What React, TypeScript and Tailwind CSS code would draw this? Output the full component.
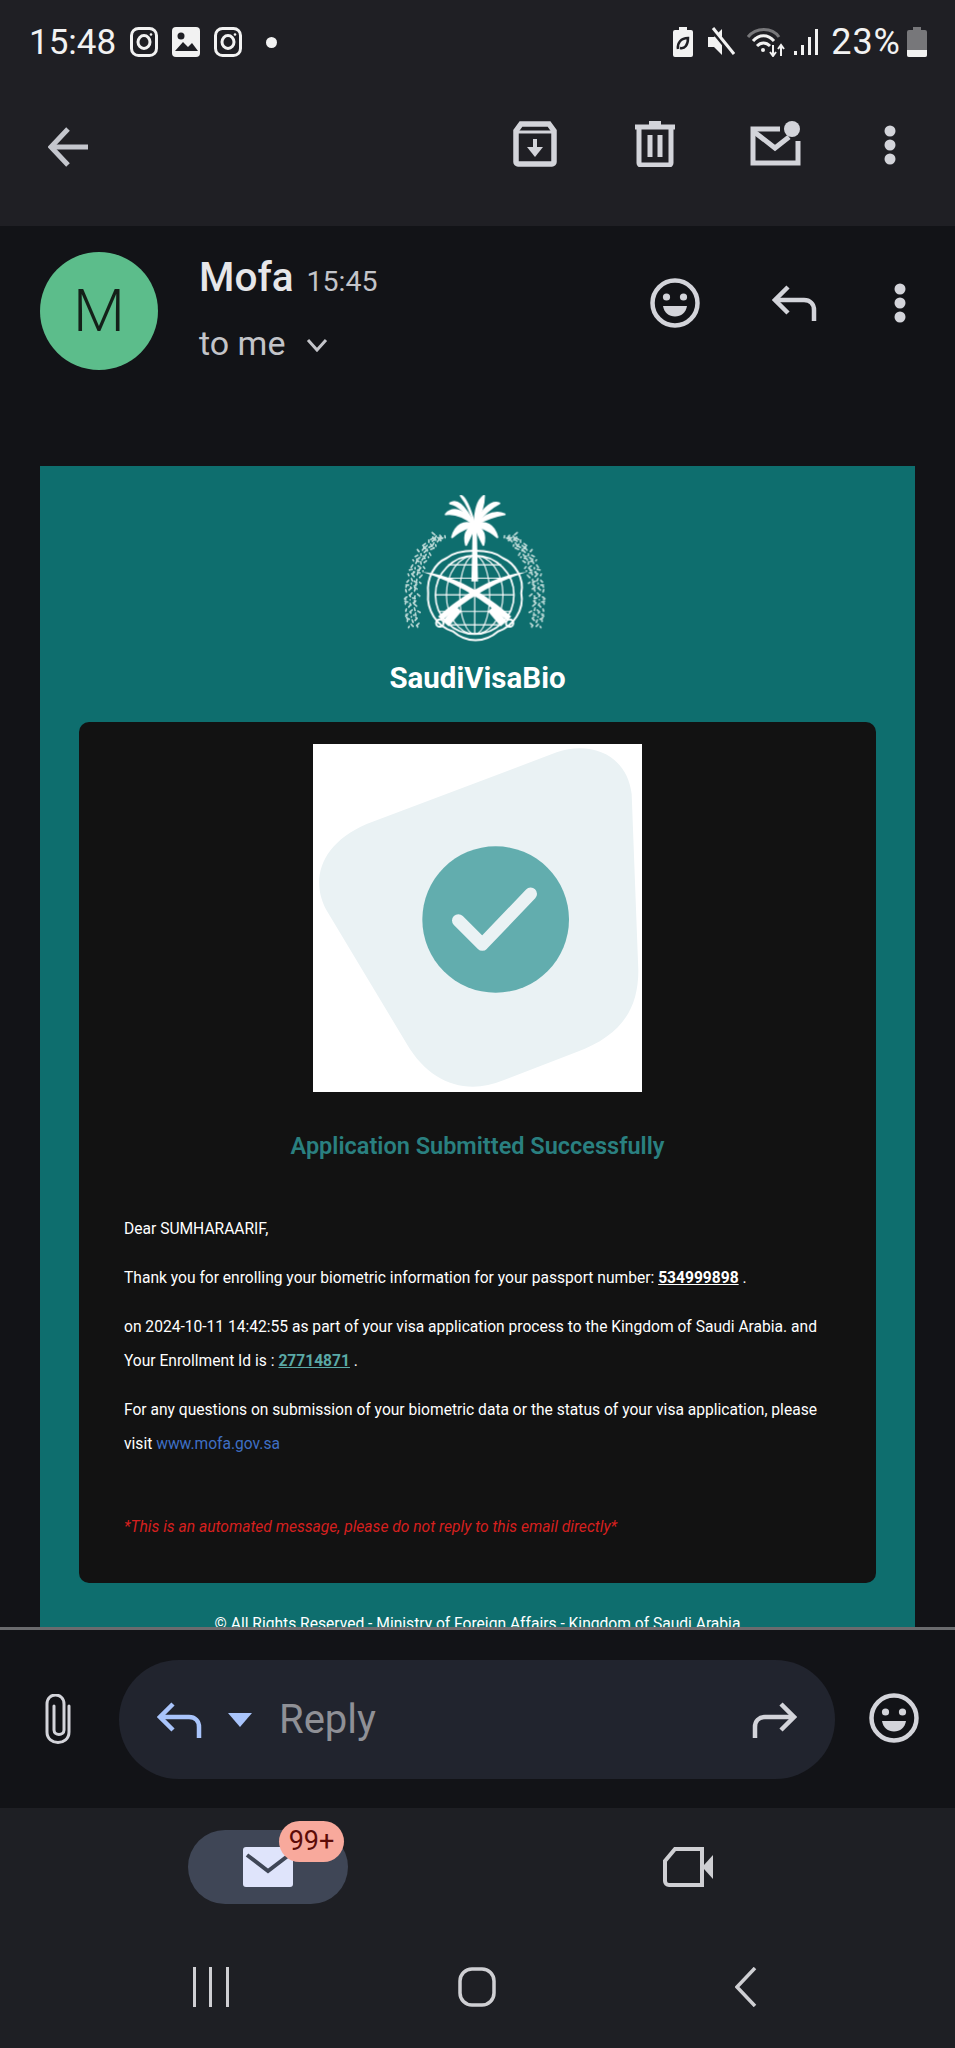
import React from "react";

const Smile = ({ className }: { className: string }) => (
  <svg viewBox="0 0 50 50" className={className} fill="none">
    <circle cx="25" cy="25" r="22.5" stroke="currentColor" strokeWidth="4.5" />
    <circle cx="16.5" cy="19" r="3.6" fill="currentColor" />
    <circle cx="33.5" cy="19" r="3.6" fill="currentColor" />
    <path d="M13 28h24c-1 6.500-6 10.500-12 10.500S14 34.500 13 28z" fill="currentColor" />
  </svg>
);

const ReplyArrow = ({ className, flip }: { className: string; flip?: boolean }) => (
  <svg viewBox="0 0 46 36" className={className} fill="none" stroke="currentColor" strokeWidth="4.500">
    <g transform={flip ? "translate(46 0) scale(-1 1)" : undefined}>
      <path d="M16 2 3 15l13 13" />
      <path d="M3 15h29c6 0 10 4 10 10v11" />
    </g>
  </svg>
);

const Dots = ({ className }: { className: string }) => (
  <svg viewBox="0 0 12 40" className={className} fill="currentColor">
    <ellipse cx="6" cy="6" rx="5.500" ry="5.500" />
    <ellipse cx="6" cy="20" rx="5.500" ry="5.500" />
    <ellipse cx="6" cy="34" rx="5.500" ry="5.500" />
  </svg>
);

const Instagram = () => (
  <svg viewBox="0 0 28 30" className="h-[30px] w-[28px]" fill="none" stroke="#f2f2f2" strokeWidth="3">
    <rect x="1.500" y="1.500" width="25" height="27" rx="7" />
    <ellipse cx="14" cy="15" rx="6" ry="6.500" />
    <circle cx="21" cy="7.500" r="1.300" fill="#f2f2f2" stroke="none" />
  </svg>
);

const StatusBar = () => (
  <div className="flex h-[84px] items-center pl-[29px] pr-[28px]">
    <span className="w-[89px] text-[35px] leading-none text-[#f2f2f2]">15:48</span>
    <div className="ml-[12px] flex items-center gap-[14px]">
      <Instagram />
      <svg viewBox="0 0 28 30" className="h-[30px] w-[28px]">
        <rect width="28" height="30" rx="4" fill="#f2f2f2" />
        <circle cx="9" cy="9" r="3.500" fill="#1f1f24" />
        <path d="M3 24 11 15l5 5 4-4 6 8z" fill="#1f1f24" />
      </svg>
      <Instagram />
    </div>
    <span className="ml-[24px] h-[11px] w-[11px] rounded-full bg-[#f2f2f2]" />
    <div className="ml-auto flex items-center">
      <svg viewBox="0 0 20 30" className="h-[30px] w-[20px]">
        <path d="M6 0h8v3h4a2 2 0 0 1 2 2v23a2 2 0 0 1-2 2H2a2 2 0 0 1-2-2V5a2 2 0 0 1 2-2h4z" fill="#f2f2f2" />
        <path d="M5 22c-1-6 3-11 10-11 0 7-3 11-8 10" fill="none" stroke="#1f1f24" strokeWidth="2.500" />
      </svg>
      <svg viewBox="0 0 28 30" className="ml-[14px] h-[30px] w-[28px]">
        <path d="M1 10h6l8-8v26l-8-8H1z" fill="#f2f2f2" />
        <path d="M4 1l23 28" stroke="#1f1f24" strokeWidth="5" />
        <path d="M6 1l21 26" stroke="#f2f2f2" strokeWidth="3" />
      </svg>
      <svg viewBox="0 0 40 30" className="ml-[11px] h-[30px] w-[40px]" fill="none">
        <path d="M2 10C10 0 26 0 33 10" stroke="#77777a" strokeWidth="3" />
        <path d="M7 14c6-7 15-7 21 0" stroke="#f2f2f2" strokeWidth="3" />
        <path d="M11 19c4-4 9-4 13 0" stroke="#f2f2f2" strokeWidth="3" />
        <circle cx="17" cy="23" r="2" fill="#f2f2f2" />
        <path d="M27 18v11M24 25l3 4 3-4M35 29V18M32 22l3-4 3 4" stroke="#f2f2f2" strokeWidth="2" />
      </svg>
      <svg viewBox="0 0 24 30" className="ml-[8px] h-[30px] w-[24px]" fill="#f2f2f2">
        <rect x="0" y="24" width="3" height="4" />
        <rect x="7" y="18" width="3" height="10" />
        <rect x="14" y="10" width="3" height="18" />
        <rect x="21" y="2" width="3" height="26" />
      </svg>
      <span className="ml-[13px] text-[36px] leading-none tracking-[1px] text-[#f2f2f2]">23%</span>
      <svg viewBox="0 0 20 30" className="ml-[6px] h-[30px] w-[20px]">
        <path d="M6 0h8v3h4a2 2 0 0 1 2 2v23a2 2 0 0 1-2 2H2a2 2 0 0 1-2-2V5a2 2 0 0 1 2-2h4z" fill="#77777a" />
        <path d="M0 23h20v5a2 2 0 0 1-2 2H2a2 2 0 0 1-2-2z" fill="#f2f2f2" />
      </svg>
    </div>
  </div>
);

const Toolbar = () => (
  <div className="flex h-[142px] items-start pl-[48px] pr-[59px] pt-[37px] text-[#d3d4da]">
    <svg viewBox="0 0 40 40" className="mt-[6px] h-[40px] w-[40px]" fill="none" stroke="#c4c6cd" strokeWidth="5">
      <path d="M20 2 3 20l17 18" />
      <path d="M3 20h37" />
    </svg>
    <svg viewBox="0 0 44 46" className="ml-[425px] h-[46px] w-[44px]" fill="none" stroke="currentColor" strokeWidth="5.500">
      <path d="M8 3h28l5 7v31a2 2 0 0 1-2 2H5a2 2 0 0 1-2-2V10z" />
      <path d="M3 11h38" strokeWidth="3" />
      <path d="M22 18v10" strokeWidth="4" />
      <path d="M14 26l8 10 8-10z" fill="currentColor" stroke="none" />
    </svg>
    <svg viewBox="0 0 40 46" className="ml-[78px] h-[46px] w-[40px]" fill="none" stroke="currentColor" strokeWidth="5">
      <path d="M0 6h40M14 2h12" />
      <path d="M4 6v36a2 2 0 0 0 2 2h28a2 2 0 0 0 2-2V6" />
      <path d="M15 14v22M25 14v22" />
    </svg>
    <svg viewBox="0 0 51 46" className="ml-[75px] h-[46px] w-[51px]" fill="none" stroke="currentColor" strokeWidth="5">
      <path d="M30 8H3v34h45V20" />
      <path d="M3 10l22 17 14-11" />
      <circle cx="42" cy="8" r="8" fill="currentColor" stroke="none" />
    </svg>
    <Dots className="ml-[83px] mt-[4px] h-[40px] w-[12px]" />
  </div>
);

const EmailHeader = () => (
  <div className="flex h-[240px] items-start pl-[40px] pr-[49px] pt-[26px]">
    <div className="flex h-[118px] w-[118px] shrink-0 items-center justify-center rounded-full bg-[#5cbd8b] text-[60px] font-light text-[#142019]">
      M
    </div>
    <div className="ml-[41px]">
      <div className="flex items-baseline gap-[13px] pt-[2px]">
        <span className="text-[40.500px] font-medium leading-[46px] text-[#e6e6e9]">Mofa</span>
        <span className="text-[28.500px] leading-[46px] text-[#c3c4c9]">15:45</span>
      </div>
      <div className="mt-[16px] flex items-center gap-[21px] text-[34px] leading-[44px] text-[#c3c4c9]">
        to me
        <svg viewBox="0 0 22 14" className="mt-[4px] h-[14px] w-[22px]" fill="none" stroke="#c3c4c9" strokeWidth="3">
          <path d="M2 2l9 10 9-10" />
        </svg>
      </div>
    </div>
    <div className="ml-auto mt-[26px] flex items-center text-[#d3d4da]">
      <Smile className="h-[50px] w-[50px]" />
      <ReplyArrow className="ml-[72px] h-[36px] w-[46px]" />
      <Dots className="ml-[76px] h-[40px] w-[12px]" />
    </div>
  </div>
);

const frondPaths = [
  "M290 135C260 90 225 78 203 103C235 98 265 115 290 135z",
  "M290 135C255 70 235 58 216 70C245 75 270 105 290 135z",
  "M290 135C275 80 262 52 248 47C262 65 280 100 290 135z",
  "M290 135C290 90 300 60 318 47C318 80 305 110 290 135z",
  "M290 135C315 85 340 62 364 70C340 82 312 108 290 135z",
  "M290 135C320 105 350 90 380 103C350 108 315 122 290 135z",
  "M290 135C258 120 232 135 222 172C245 150 265 145 290 135z",
  "M290 135C268 145 256 165 264 195C276 172 284 155 290 135z",
  "M290 135C312 145 324 165 316 195C304 172 296 155 290 135z",
  "M290 135C322 120 348 135 358 172C335 150 315 145 290 135z",
];

// short strokes along the left band (the right one is its mirror), stand-in for the calligraphy
const calligraphyMarks = () => {
  const marks: string[] = [];
  for (let i = 0; i < 110; i++) {
    const t = i / 109;
    const u = 1 - t;
    const x = u * u * u * 190 + 3 * u * u * t * 120 + 3 * u * t * t * 82 + t * t * t * 105;
    const y = u * u * u * 165 + 3 * u * u * t * 210 + 3 * u * t * t * 330 + t * t * t * 440;
    const offset = ((i * 17) % 41) - 20;
    const dx = ((i * 13) % 17) - 8;
    const dy = ((i * 29) % 15) - 7;
    marks.push(`M${(x + offset).toFixed(1)} ${y.toFixed(1)}l${dx} ${dy}`);
  }
  return marks.join("");
};

// emblem drawn in the coordinates of a 3x crop, 200px wide on the page
const Emblem = () => (
  <svg viewBox="0 0 600 490" className="h-[163px] w-[200px]" fill="none" stroke="#fff">
    <g stroke="#d4e9e6" strokeLinecap="round" strokeWidth="5" opacity="0.9">
      <path d={calligraphyMarks()} />
      <path d={calligraphyMarks()} transform="translate(580 0) scale(-1 1)" />
    </g>
    <g stroke="#fff" strokeWidth="3.500">
      <path d="M205 235C170 250 145 295 150 340C145 390 175 440 225 455C265 490 320 490 360 455C405 440 440 390 430 340C440 295 410 250 375 235C340 205 240 205 205 235z" strokeWidth="6" />
      <circle cx="290" cy="345" r="118" strokeWidth="5" />
      <ellipse cx="290" cy="345" rx="85" ry="118" />
      <ellipse cx="290" cy="345" rx="45" ry="118" />
      <path d="M172 345h236M182 295h216M182 395h216M210 255h160M210 435h160M290 227v236" />
    </g>
    <path d="M284 130h12l4 175h-20z" fill="#fff" stroke="none" />
    {frondPaths.map((d) => (
      <path key={d} d={d} fill="#fff" stroke="#fff" strokeWidth="6" strokeLinejoin="round" />
    ))}
    <g fill="#fff" stroke="none">
      <path d="M133 276C230 285 320 340 400 410L388 422C315 360 240 310 133 276z" />
      <path d="M447 276C350 285 260 340 180 410L192 422C265 360 340 310 447 276z" />
      <path d="M232 378 250 395 212 440 194 424z" />
      <path d="M348 378 330 395 368 440 386 424z" />
    </g>
    <circle cx="185" cy="430" r="11" strokeWidth="6" />
    <circle cx="395" cy="430" r="11" strokeWidth="6" />
  </svg>
);

const SuccessPicture = () => (
  <div className="h-[348px] w-[329px] bg-white">
    <svg viewBox="69 40 987 1045" preserveAspectRatio="none" className="h-full w-full">
      <path
        d="M230 280 800 65C900 30 1010 70 1025 190L1045 720C1045 850 980 920 860 965L640 1050C530 1095 420 1060 350 940L110 540C60 450 90 340 230 280z"
        fill="#eaf2f4"
      />
      <circle cx="617" cy="567" r="220" fill="#62adae" />
      <path d="M505 570 577 642 722 490" fill="none" stroke="#eaf2f4" strokeWidth="38" strokeLinecap="round" strokeLinejoin="round" />
    </svg>
  </div>
);

const EmailCard = () => (
  <div className="mx-[40px] bg-[#0e6e6e] px-[39px] pt-[14px]">
    <div className="flex flex-col items-center">
      <Emblem />
      <div className="mt-[17px] text-[29.500px] font-bold leading-[36px] text-white">SaudiVisaBio</div>
    </div>
    <div className="mt-[26px] h-[861px] rounded-[10px] bg-[#121212] px-[45px] pt-[22px] text-[15.600px] text-white">
      <div className="flex justify-center">
        <SuccessPicture />
      </div>
      <div className="mt-[39px] text-center text-[23.500px] font-semibold leading-[30px] text-[#2a8080]">
        Application Submitted Successfully
      </div>
      <p className="mt-[51px] leading-[34px]">Dear SUMHARAARIF,</p>
      <p className="mt-[15px] leading-[34px]">
        Thank you for enrolling your biometric information for your passport number:{" "}
        <span className="font-bold underline">534999898</span> .
      </p>
      <p className="mt-[15px] leading-[34px]">
        on 2024-10-11 14:42:55 as part of your visa application process to the Kingdom of Saudi Arabia. and Your
        Enrollment Id is : <span className="font-bold text-[#5aa9a6] underline">27714871</span> .
      </p>
      <p className="mt-[15px] leading-[34px]">
        For any questions on submission of your biometric data or the status of your visa application, please visit{" "}
        <span className="text-[#3f6fc4]">www.mofa.gov.sa</span>
      </p>
      <p className="mt-[49px] italic leading-[34px] text-[#d6201f]">
        *This is an automated message, please do not reply to this email directly*
      </p>
    </div>
    <div className="mt-[31px] text-center text-[15.600px] leading-[20px] text-white">
      © All Rights Reserved - Ministry of Foreign Affairs - Kingdom of Saudi Arabia
    </div>
  </div>
);

const ReplyBar = () => (
  <div className="flex h-[181px] shrink-0 items-start border-t-[3px] border-[#6a6b6e] bg-[#121317] pl-[43px] pr-[34px] pt-[30px] text-[#d3d4da]">
    <svg viewBox="0 0 30 50" className="mt-[34px] h-[50px] w-[30px]" fill="none" stroke="currentColor" strokeWidth="3" strokeLinecap="round">
      <path d="M26 12V38C26 52 4 52 4 38V10C4-2 21-2 21 10V36C21 42 11 42 11 36V12" />
    </svg>
    <div className="ml-[46px] flex h-[119px] w-[716px] items-center rounded-[60px] bg-[#21242e] pl-[38px] pr-[38px]">
      <ReplyArrow className="h-[36px] w-[46px] text-[#a9c4fb]" />
      <svg viewBox="0 0 24 14" className="ml-[25px] h-[14px] w-[24px]" fill="#a9c4fb">
        <path d="M0 0h24L12 14z" />
      </svg>
      <span className="ml-[27px] text-[40px] leading-none text-[#8f9096]">Reply</span>
      <ReplyArrow flip className="ml-auto h-[36px] w-[46px] text-[#d3d4da]" />
    </div>
    <Smile className="ml-[34px] mt-[33px] h-[50px] w-[50px]" />
  </div>
);

const BottomNav = () => (
  <div className="flex flex-1 flex-col bg-[#1e1f24]">
    <div className="flex h-[127px] items-start pl-[188px] pt-[22px]">
      <div className="relative flex h-[74px] w-[160px] items-center justify-center rounded-[37px] bg-[#3f4656]">
        <svg viewBox="0 0 50 40" className="h-[40px] w-[50px]">
          <rect width="50" height="40" rx="3" fill="#dfe4fb" />
          <path d="M4 8l21 16L46 8" fill="none" stroke="#3f4656" strokeWidth="4" />
        </svg>
        <span className="absolute left-[91px] top-[-9px] flex h-[41px] w-[65px] items-center justify-center rounded-[21px] bg-[#f8a99c] text-[27px] text-[#5c0c08]">
          99+
        </span>
      </div>
      <svg viewBox="0 0 50 40" className="ml-[315px] mt-[17px] h-[40px] w-[50px]" fill="none" stroke="#cfcfd3" strokeWidth="4">
        <path d="M12 2h27v36H6a4 4 0 0 1-4-4V14z" />
        <path d="M41 18 50 8v24l-9-10z" fill="#cfcfd3" stroke="none" />
      </svg>
    </div>
    <div className="flex items-start pl-[193px] pt-[32px]">
      <svg viewBox="0 0 36 40" className="h-[40px] w-[36px]" fill="#cfcfd3">
        <rect x="0" y="0" width="3" height="40" />
        <rect x="16" y="0" width="3" height="40" />
        <rect x="33" y="0" width="3" height="40" />
      </svg>
      <svg viewBox="0 0 38 40" className="ml-[229px] h-[40px] w-[38px]" fill="none" stroke="#cfcfd3" strokeWidth="3.500">
        <rect x="2" y="2" width="34" height="36" rx="12" />
      </svg>
      <svg viewBox="0 0 22 40" className="ml-[239px] h-[40px] w-[22px]" fill="none" stroke="#cfcfd3" strokeWidth="3.500">
        <path d="M20 1 2 20l18 19" />
      </svg>
    </div>
  </div>
);

export default function App() {
  return (
    <div className="flex h-[2048px] w-[955px] flex-col overflow-hidden bg-[#121317] font-['Roboto',sans-serif]">
      <div className="h-[226px] shrink-0 bg-[#1f1f24]">
        <StatusBar />
        <Toolbar />
      </div>
      <div className="h-[1401px] shrink-0 overflow-hidden">
        <EmailHeader />
        <EmailCard />
      </div>
      <ReplyBar />
      <BottomNav />
    </div>
  );
}
